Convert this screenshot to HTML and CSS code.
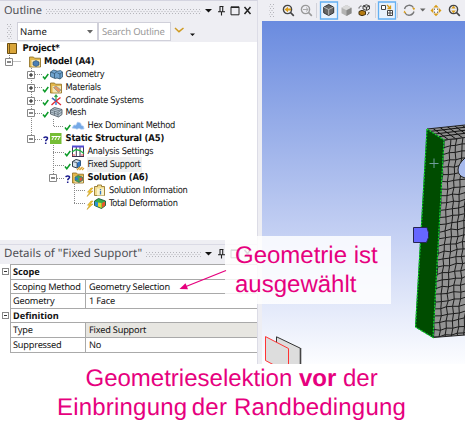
FILE: index.html
```html
<!DOCTYPE html>
<html lang="de">
<head>
<meta charset="utf-8">
<title>Fixed Support</title>
<link rel="stylesheet" href="styles.css">
</head>
<body>
<svg width="0" height="0" class="defs">
  <defs>
    <pattern id="dots" width="3" height="4" patternUnits="userSpaceOnUse"><path d="M0 0h1v1H0zM1.5 2h1v1h-1z" fill="#b5b5bb"/></pattern>
    <g id="tick"><path d="M1 8.5l1.8 2.3L6.3 6" fill="none" stroke="#0b9a28" stroke-width="1.5"/></g>
    <g id="quest"><path d="M1.8 6.2C2 4.4 5.8 4.4 5.5 6.5 5.3 7.7 3.7 7.7 3.7 9.3M3.7 10.4v1.5" fill="none" stroke="#1a1a8c" stroke-width="1.5"/></g>
    <g id="bolt"><path d="M5 4L1.5 8.2h2L1 12.5 7 7H4.3L7 4z" fill="#f6c92c" stroke="#b98a10" stroke-width=".5"/></g>
    <g id="folder"><path d="M8.500 2h4l1 1.200h6V12h-11z" fill="#e3b84c" stroke="#8b6b1c" stroke-width=".8"/><path d="M10.500 5h8.500v6.500h-8.500z" fill="#f5e6b6"/></g>
    <g id="pin"><path d="M1.5.5h4M2 .5v5M4.7.5v5M0 5.7h7M3.5 6v3.5" fill="none" stroke="#222" stroke-width="1.1"/></g>
    <g id="cube"><path d="M0 2.7L5 0l5 2.7v5.6L5 11 0 8.3z"/></g>
    <g id="lens"><circle cx="5" cy="5" r="4.1" fill="none" stroke-width="1.4"/><path d="M8 8l3.3 3.3" stroke-width="1.7"/></g>
  </defs>
</svg>
<main class="app">
  <div class="side">
    <section class="outline">
      <header class="title">
        <h2 class="t-outline">Outline</h2>
        <svg class="grip"><rect width="100%" height="5" fill="url(#dots)"/></svg>
        <svg class="winbtns" width="50" height="12" viewBox="0 0 50 12">
          <path d="M1 4h7L4.500 7.500z" fill="#111"/><use href="#pin" x="14" y="1"/>
          <path d="M27 1.800h8v8h-8zM27 2.500h8" fill="none" stroke="#222"/>
          <path d="M40.500 2l6 7M46.500 2l-6 7" stroke="#222" stroke-width="1.500"/>
        </svg>
      </header>
      <div class="filter">
        <svg width="5" height="15"><rect width="5" height="15" fill="url(#dots)"/></svg>
        <div class="select"><span class="t-name">Name</span><svg width="6" height="4"><path d="M0 0h6L3 3.500z" fill="#666"/></svg></div>
        <div class="search"><span class="t-search">Search Outline</span></div>
        <svg class="more" width="22" height="12"><path d="M1 2l4 3.700L9.500 2" fill="none" stroke="#cf9a20" stroke-width="1.500"/><path d="M16 7.500h5L18.500 10z" fill="#111"/></svg>
      </div>
      <div class="tree">
        <svg class="guides" width="110" height="172" viewBox="0 42 110 172">
          <path d="M9.500 55v6M9.500 61.500H21M31.500 68v71M31 74.500h12M31 87.500h12M31 100.500h12M31 113.500h12M31 139.500h12M53.500 119v7.500H64M53.500 145v33M53 152.500h11M53 165.500h11M53 178.500h12M74.500 184v20M74 190.500h12M74 203.500h12" fill="none" stroke="#888" stroke-dasharray="1 1"/>
          <g fill="#fff" stroke="#888"><path d="M5.500 58.500h7v7h-7zM27.500 71.500h7v7h-7zM27.500 84.500h7v7h-7zM27.500 97.500h7v7h-7zM27.500 109.500h7v7h-7zM27.500 135.500h7v7h-7zM49.500 174.500h7v7h-7z"/></g>
          <path d="M7 62h4M29 75h4M31 73v4M29 88h4M31 86v4M29 101h4M31 99v4M29 113h4M29 139h4M51 178h4" stroke="#111"/>
        </svg>
        <div class="row l0 b"><svg class="ic" viewBox="0 0 22 13"><path d="M8.500 1.500h9v10h-9z" fill="#d9a53a" stroke="#6b4d10"/><path d="M10.500 1v11" stroke="#7a5a18"/></svg><span>Project*</span></div>
        <div class="row l1 b"><svg class="ic" viewBox="0 0 22 13"><use href="#folder"/><path d="M12 7l3-1.500L18 7v3l-3 1.500L12 10z" fill="#4b7fb5" stroke="#24435f" stroke-width=".6"/></svg><span>Model (A4)</span></div>
        <div class="row l2"><svg class="ic" viewBox="0 0 22 13"><use href="#tick"/><path d="M8.500 4l3-2 4 1.200 3-.7 2 1.500v5l-2.500 2-3-1-2 .5-4.500-2z" fill="#6fa3cf" stroke="#31556f" stroke-width=".8"/><path d="M8.500 4l4 1.500 3-2.300M12.500 5.500V10M15.500 5l2.500 1 2.500-2M18 6v5" fill="none" stroke="#2d4d66" stroke-width=".7"/></svg><span>Geometry</span></div>
        <div class="row l2"><svg class="ic" viewBox="0 0 22 13"><use href="#tick"/><use href="#folder"/><path d="M11.500 6.500l2.500-1.500 5 4-2.500 2.500z" fill="#e59a65" stroke="#87918f" stroke-width=".7"/></svg><span>Materials</span></div>
        <div class="row l2"><svg class="ic" viewBox="0 0 22 13"><use href="#tick"/><path d="M14 7V1.500M12.500 3L14 1l1.500 2" fill="none" stroke="#2aa347" stroke-width="1.200"/><path d="M14 7l-4.500 4M14 7l5 4M14 7l-4-3M14 7l4.500-3.500" stroke="#e02b36" stroke-width="1.400"/><path d="M14 7l-4-3M14 8v3" stroke="#2474d4" stroke-width="1.300"/></svg><span>Coordinate Systems</span></div>
        <div class="row l2"><svg class="ic" viewBox="0 0 22 13"><use href="#tick"/><path d="M8.500 4l4-2.500 7.500 2v5L16.500 11l-4-1.500-4-1.500z" fill="#b9c7d2" stroke="#45525c" stroke-width=".8"/><path d="M8.500 4l7.500 2.300 4-2.800M16 6.300V11M12.500 5v4.500M10.500 2.700l7.500 2.300M8.500 6l7.500 2.500 4-2.500" fill="none" stroke="#4e5c67" stroke-width=".6"/></svg><span>Mesh</span></div>
        <div class="row l3"><svg class="ic" viewBox="0 0 22 13"><use href="#tick"/><path d="M8 9l2-3 2 .2L13.500 3l3 1 1 2.500 2 .8.500 2.700-3 .2-2-1-2 1-2-.8z" fill="#75a9e6" stroke="#b3d0f2" stroke-width=".7"/></svg><span>Hex Dominant Method</span></div>
        <div class="row l2 b"><svg class="ic" viewBox="0 0 22 13"><use href="#quest"/><path d="M8 1h11.500v11H8z" fill="#75bd35"/><path d="M9.500 4.500h9M11.500 5l-1.500 3M14.500 5L13 8M17.500 5L16 8" stroke="#fff" stroke-width="1"/></svg><span>Static Structural (A5)</span></div>
        <div class="row l3"><svg class="ic" viewBox="0 0 22 13"><use href="#tick"/><path d="M8.500 1.500h11v10M8.500 1v11M12.300 1v11M16 1v11M8 11.500h12" fill="none" stroke="#3b3153"/><path d="M8 1.500h12" stroke="#524bd2" stroke-width="2"/><path d="M8 7l4-2.500 4 1 4 3" fill="none" stroke="#1eb340" stroke-width="1.300"/><path d="M8 10h3M17 10h3" stroke="#e14646"/></svg><span>Analysis Settings</span></div>
        <div class="row l3"><svg class="ic" viewBox="0 0 22 13"><use href="#tick"/><path d="M8.500 3.500L12 1.500l4.500 1.200v5L13 10l-4.500-1.500z" fill="#d7e4ef" stroke="#2f3c46"/><path d="M13 4.700l3.500-2v5L13 10z" fill="#3479c5"/><path d="M8.500 3.500L13 4.700V10" fill="none" stroke="#2f3c46" stroke-width=".7"/><path d="M13 12l3-3M15.500 12l3-3M18 12l2-2" stroke="#daa12c" stroke-width="1.200"/></svg><span class="sel">Fixed Support</span></div>
        <div class="row l3 b"><svg class="ic" viewBox="0 0 22 13"><use href="#quest"/><use href="#folder"/><path d="M11 6l3-1.500L18.500 6v3.500L15 11.500l-4-2z" fill="#3fa65a" stroke="#31534d" stroke-width=".6"/><path d="M11.300 6.500h2.500V9h-2.500z" fill="#2775d0"/><path d="M15.500 7l2.500-.7v3l-2.500 1z" fill="#df523b"/></svg><span>Solution (A6)</span></div>
        <div class="row l4"><svg class="ic" viewBox="0 0 22 13"><use href="#bolt"/><path d="M8.500 2.500h3V1h4v1.500h3v9h-10z" fill="#f0dc92" stroke="#8b6b1c" stroke-width=".8"/><path d="M11 4.500h7v7h-7z" fill="#fbf3cb"/><path d="M14.500 5v1.200M14.500 7v3.500" stroke="#3478c4" stroke-width="1.300"/></svg><span>Solution Information</span></div>
        <div class="row l4"><svg class="ic" viewBox="0 0 22 13"><use href="#bolt"/><path d="M8.500 4l4-2.500L19.500 4v4.500l-4 3-7-3z" fill="#35ae4c" stroke="#1c5736" stroke-width=".9"/><path d="M9 4.500l3 1v4l-3-1z" fill="#2d8fd8"/><path d="M16 6l3-1.500v4l-3 2.300z" fill="#e6572d"/><path d="M12 5.500L15.500 6v5L12 9.500z" fill="#e6d930"/></svg><span>Total Deformation</span></div>
      </div>
    </section>
    <section class="details">
      <header class="title">
        <h2 class="t-details">Details of "Fixed Support"</h2>
        <svg class="grip"><rect width="100%" height="5" fill="url(#dots)"/></svg>
        <svg class="winbtns" width="50" height="12" viewBox="0 0 50 12">
          <path d="M1 4h7L4.500 7.500z" fill="#111"/><use href="#pin" x="14" y="1"/>
          <path d="M27 1.800h8v8h-8zM27 2.500h8" fill="none" stroke="#222"/>
          <path d="M40.500 2l6 7M46.500 2l-6 7" stroke="#222" stroke-width="1.500"/>
        </svg>
      </header>
      <div class="props">
        <div class="group"><i class="minus"></i><b>Scope</b></div>
        <div class="prop"><div>Scoping Method</div><div>Geometry Selection</div></div>
        <div class="prop"><div>Geometry</div><div>1 Face</div></div>
        <div class="group"><i class="minus"></i><b>Definition</b></div>
        <div class="prop"><div>Type</div><div class="ro">Fixed Support</div></div>
        <div class="prop"><div>Suppressed</div><div>No</div></div>
      </div>
    </section>
  </div>
  <div class="stage">
    <svg class="toolbar" width="207" height="21" viewBox="258 0 207 21">
      <rect x="269" y="4" width="5" height="14" fill="url(#dots)"/>
      <g stroke="#444"><use href="#lens" x="282.500" y="4.500"/></g><path d="M284.500 9.500l3.500-2.700v1.700h3v2h-3v1.700z" fill="#d99c16"/>
      <g stroke="#999"><use href="#lens" x="300.500" y="4.500"/></g><path d="M303 9.500h5M306 7.500l2.200 2-2.200 2" fill="none" stroke="#aaa"/>
      <path d="M316.500 3v15M375.500 3v15M397.500 3v15" stroke="#d2d2da"/>
      <path d="M320.500 2h17v17h-17zM378.500 2h17v17h-17z" fill="#e9f2fc" stroke="#63b0f3" stroke-width="1.300"/>
      <use href="#cube" x="323.700" y="4.500" fill="#666" stroke="#333"/><path d="M324 7.200l4.700 2.300 4.700-2.300M328.700 9.500v5.700" fill="none" stroke="#ccc" stroke-width=".8"/>
      <use href="#cube" x="341.500" y="5" fill="#b3b3b3"/><path d="M341.500 7.700l5-2.700 5 2.700-5 2.600z" fill="#dadada"/><path d="M346.500 10.300l5-2.600v5.600l-5 2.700z" fill="#888"/>
      <path d="M363 6l3.500-1.200 3 1.200v3l-3 1.500-3.500-1.500zM363 6l3.500 1.200 3-1.200M366.500 7v3" fill="#ddd" stroke="#444"/><path d="M359 11.500l3-1.200 3.500 1.200v3l-3.500 1.200-3-1.200z" fill="#b57a12" stroke="#413013"/><path d="M359 8.500c0-1.500 1-2.500 2.500-2.500M369 12c0 1.500-1 2.500-2 3" fill="none" stroke="#444"/>
      <path d="M381.500 5.500h4v4h-4z" fill="#fff" stroke="#444"/><path d="M387.500 10.500h5v5h-5zM390 10.500v5M387.500 13h5" fill="#fff" stroke="#444"/><path d="M387 5l3 3M390.500 5.500v3h-3" fill="none" stroke="#d99c16" stroke-width="1.300"/>
      <path d="M404.500 9a5 5 0 0 1 9-1.500M414 11.500a5 5 0 0 1-9 1.500" fill="none" stroke="#777" stroke-width="1.300"/><path d="M412 7.500l3 .5-1 2.500zM406.500 13.500l-3-1 1-2z" fill="#d99c16"/>
      <path d="M420 8.500h5.500L422.700 11.500z" fill="#666"/>
      <path d="M436 4.700l2.700 2.800h-5.400zM436 16.300l-2.700-2.800h5.400zM430.500 10.500l2.800-2.700v5.400zM441.500 10.500l-2.800-2.700v5.400z" fill="#d99c16"/><path d="M434.500 9h3v3h-3z" fill="#fff"/><path d="M434 9.200h1M437 9.200h1M434 12.200h1M437 12.200h1" stroke="#444"/>
      <g stroke="#444"><use href="#lens" x="448.500" y="4.500"/></g><path d="M453.500 5.800l2.300 2.800h-4.600zM453.500 13.200l-2.300-2.800h4.600z" fill="#d99c16"/>
    </svg>
    <svg class="view" width="203" height="343" viewBox="262 21 203 343">
      <defs>
        <clipPath id="front"><path d="M444 140L465 137.500V158Q458 164 458 170T465 178V335L433 337.500z"/></clipPath>
        <clipPath id="top"><path d="M427 129L465 125V137.500L444 140z"/></clipPath>
      </defs>
      <g clip-path="url(#top)"><path d="M420 120h45v22h-45z" fill="#8d8d8d"/><path d="M425 132l42-5M431 134.500l36-4.500M436 137l31-4M431 127l18 13M438 126l18 13M445 125l18 13M452 124l18 13M459 123l18 13" fill="none" stroke="#111"/></g>
      <path d="M427 129L465 125" stroke="#222" fill="none"/>
      <g clip-path="url(#front)"><path d="M430 130h35v210h-35z" fill="#949494"/><path id="mesh" fill="none" stroke="#1a1a1a" stroke-width="1"/></g>
      <path d="M444 140L465 137.500M433 337.500L465 335M465 158Q458 164 458 170T465 178" fill="none" stroke="#222"/>
      <path d="M427 129L444 140 433 337.500 415.500 327z" fill="#004c00"/>
      <path d="M427 129L444 140 433 337.500 415.500 327z" fill="none" stroke="#063" stroke-width="1"/>
      <path d="M427 129L444 140 433 337.500 415.500 327z" fill="none" stroke="#18e018" stroke-width="1.200" stroke-dasharray="1.500 1.700"/>
      <path d="M434 158.500v9.500M429.500 163.500h9" stroke="#6f9d9b"/>
      <path d="M413.500 227.500h13.500l1.500 5v5l-2 5h-13z" fill="#6666ff" stroke="#26264f"/>
      <path d="M276.500 364v-27.200l24 11.500V364" fill="#ddd" stroke="#333"/><path d="M300.500 348v16" stroke="#444" stroke-width="1.600"/>
      <path d="M288.500 365v-16.500L265.500 336.600v24l8 4.400z" fill="#ddd"/><path d="M273 364.500l-7.500-4V336.600L288.500 348.500V365" fill="none" stroke="#f33"/>
    </svg>
  </div>
  <div class="callout">
    <div><span class="c1">Geometrie ist</span></div>
    <div><span class="c2">ausgewählt</span></div>
  </div>
  <svg class="arrow" width="50" height="24" viewBox="178 268 50 24"><path d="M226 270.500L186 286.500" stroke="#e6007e" stroke-width="1.300"/><path d="M179.500 289l6-5.700 2.500 6z" fill="#e6007e"/></svg>
</main>
<footer class="caption">
  <div><span class="c3">Geometrieselektion <b>vor</b> der</span></div>
  <div><span class="c4">Einbringung</span><span class="c5">der Randbedingung</span></div>
</footer>
<script src="mesh.js"></script>
</body>
</html>
```
FILE: styles.css
```css
* { box-sizing: border-box; }
body { margin: 0; width: 465px; height: 432px; overflow: hidden; background: #fff; font-family: "Noto Sans", "Open Sans", sans-serif; color: #111; text-rendering: geometricPrecision; }
svg { display: block; flex: none; }
.defs { position: absolute; }
.app { position: relative; display: flex; height: 364px; }
.side { width: 258px; display: flex; flex-direction: column; }
.stage { flex: 1; background: #eeeef3; display: flex; flex-direction: column; align-items: flex-end; }
.view { background: linear-gradient(#6a8bdf, #90a8e7 26%, #c4d0f3 62%, #fcfdff); }
.outline { height: 240px; display: flex; flex-direction: column; border-top: 1px solid #d4d4e0; border-right: 1px solid #dcdce6; background: #eeeef3; }
.title { display: flex; align-items: center; height: 20px; padding: 0 6px 0 4px; background: #eeeef3; }
.title h2 { margin: 0; font-size: 11px; font-weight: 400; color: #505055; white-space: nowrap; line-height: 18px; }
.title .t-details { font-size: 11.500px; }
.grip { flex: 1; width: 10px; height: 5px; margin: 0 3px 0 4px; }
.winbtns { margin-right: -3px; }
.filter { display: flex; align-items: center; height: 21px; padding-left: 7px; background: #eeeef3; }
.filter > svg:first-child { margin-right: 5px; }
.select, .search { display: flex; align-items: center; height: 19px; background: #fff; border: 1px solid #d0d0da; font-size: 9.500px; }
.select { width: 81px; justify-content: space-between; padding: 0 4px 0 2px; }
.search { width: 73px; padding-left: 3px; color: #999; white-space: nowrap; letter-spacing: -.2px; }
.more { margin-left: 3px; }
.tree { position: relative; flex: 1; background: #fff; }
.guides { position: absolute; left: 0; top: 0; }
.row { position: relative; display: flex; align-items: center; height: 12.920px; font: 9.200px "DejaVu Sans Condensed", "DejaVu Sans", sans-serif; letter-spacing: -.28px; white-space: nowrap; }
.row span { margin-left: 1.500px; padding-top: 1px; line-height: 12px; }
.row.b { font-weight: 700; font-size: 9.400px; letter-spacing: -.14px; }
.ic { width: 22px; height: 13px; }
.l0 { margin-left: -1px; }
.l1 { margin-left: 20.500px; }
.l2 { margin-left: 42px; }
.l3 { margin-left: 64px; }
.l4 { margin-left: 85.500px; }
.row .sel { background: #f0f0f0; box-shadow: 0 0 0 1px #f0f0f0; }
.details { flex: 1; border-right: 1px solid #dcdce6; background: #fff; }
.details .title { height: 24px; border-top: 4px solid #eeeef3; box-shadow: inset 0 1px #dadae5; }
.props { font-size: 9.200px; line-height: 13px; letter-spacing: -.2px; border-bottom: 1px solid #aaa; margin-left: 10px; }
.props b { letter-spacing: 0; }
.group, .prop { height: 14.600px; border-top: 1px solid #a9a9a9; border-left: 1px solid #a9a9a9; display: flex; white-space: nowrap; }
.group { position: relative; padding-left: 2px; }
.minus { position: absolute; left: -9px; top: 3px; width: 7px; height: 7px; border: 1px solid #888; background: linear-gradient(#333, #333) center / 3px 1px no-repeat; }
.prop > div { padding-left: 2px; }
.prop > div:first-child { width: 75px; border-right: 1px solid #a9a9a9; }
.prop > div:last-child { flex: 1; padding-left: 3px; }
.prop > .ro { background: #e7e6e1; }
.callout { position: absolute; left: 225px; top: 236px; width: 166px; height: 68px; padding: 5px 0 0 10px; background: rgba(255, 255, 255, .84); }
.callout, .caption { font: 24px/29px "Liberation Sans", Arial, sans-serif; color: #e6007e; white-space: nowrap; }
.arrow { position: absolute; left: 178px; top: 268px; }
.caption { padding-left: 57px; }
.caption div:first-child { padding-left: 28.500px; }
.c4, .c5 { letter-spacing: .2px; }
.c5 { margin-left: 4.500px; }
```
FILE: mesh.js
```js
// Builds the slightly irregular quad mesh on the front face.
const jitter = (i, j) => (Math.sin(i * 12.9 + j * 78.2) * 43758.5 % 1) * 0.9;
const point = (i, j) => {
  const x = 444 - j * 0.39 + i * 6.2 + jitter(i, j);
  const y = 140 + j * 7.05 - i * 0.9 + jitter(j, i + 3);
  return x.toFixed(1) + " " + y.toFixed(1);
};
let d = "";
for (let j = 0; j <= 30; j++) {
  d += "M" + Array.from({ length: 8 }, (_, i) => point(i, j)).join("L");
}
for (let i = 0; i < 8; i++) {
  d += "M" + Array.from({ length: 31 }, (_, j) => point(i, j)).join("L");
}
document.getElementById("mesh").setAttribute("d", d);
```
